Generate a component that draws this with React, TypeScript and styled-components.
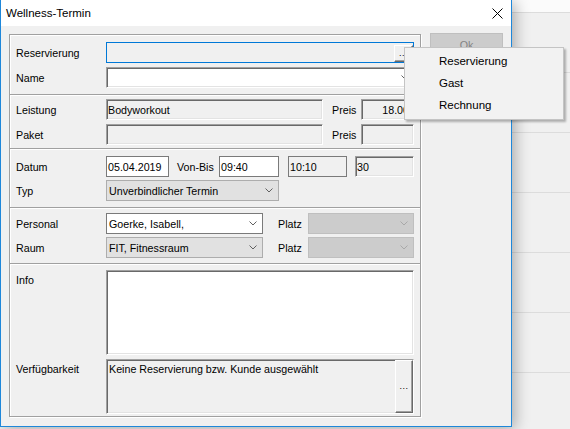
import React from "react";
import styled, { createGlobalStyle, css } from "styled-components";

const GlobalStyle = createGlobalStyle`
  html, body {
    margin: 0;
    padding: 0;
  }
  body {
    width: 570px;
    height: 429px;
    overflow: hidden;
    font-family: "Liberation Sans", Arial, sans-serif;
    font-size: 10.7px;
    color: #000;
    background-color: #f0f0f0;
    background-image:
      linear-gradient(#fbfbfb 0 12px, transparent 12px),
      repeating-linear-gradient(to bottom, transparent 0 12px, #dcdcdc 12px 13px, transparent 13px 60px);
  }
`;

const Window = styled.div`
  position: relative;
  width: 512px;
  height: 427px;
  box-sizing: border-box;
  border: 1px solid #1e87da;
  border-top: none;
  background: #f0f0f0;
  box-shadow: 3px 2px 14px rgba(0, 0, 0, 0.3);
  display: flex;
  flex-direction: column;
`;

const TitleBar = styled.div`
  height: 26px;
  flex: none;
  background: #fff;
  display: flex;
  align-items: center;
  justify-content: space-between;
  padding: 0 8px 0 5px;
`;

const Title = styled.span`
  font-size: 11.5px;
`;

const Body = styled.div`
  flex: 1;
  display: flex;
  align-items: flex-start;
  gap: 9px;
  padding: 8px 8px 9px 8px;
`;

const GroupBox = styled.div`
  width: 412px;
  box-sizing: border-box;
  border: 1px solid #a0a0a0;
  box-shadow: inset 1px 1px #fff, 1px 1px #fff;
  display: flex;
  flex-direction: column;
`;

const Section = styled.div<{ $top: number; $bottom: number; $gap: number }>`
  display: flex;
  flex-direction: column;
  gap: ${(p) => p.$gap}px;
  padding: ${(p) => p.$top}px 6px ${(p) => p.$bottom}px;

  & + & {
    border-top: 1px solid #a0a0a0;
    box-shadow: inset 0 1px #fff;
  }
`;

const Row = styled.div<{ $h?: number }>`
  display: flex;
  align-items: center;
  height: ${(p) => p.$h ?? 21}px;
`;

const Label = styled.div<{ $top?: boolean }>`
  width: 90px;
  flex: none;
  white-space: nowrap;
  ${(p) =>
    p.$top &&
    css`
      align-self: flex-start;
      line-height: 21px;
    `}
`;

const InlineLabel = styled.div<{ $w: number; $ml: number }>`
  width: ${(p) => p.$w}px;
  margin-left: ${(p) => p.$ml}px;
  flex: none;
  white-space: nowrap;
`;

type Look = "sunken" | "focus" | "flat";

const looks = {
  sunken: css`
    border: 1px solid;
    border-color: #a0a0a0 #fff #fff #a0a0a0;
    box-shadow: inset 1px 1px #696969, inset -1px -1px #e3e3e3;
  `,
  focus: css`
    border: 1px solid #0078d7;
  `,
  flat: css`
    border: 1px solid #7a7a7a;
  `,
};

const TextBox = styled.div<{
  $look: Look;
  $w?: number;
  $h?: number;
  $white?: boolean;
  $right?: boolean;
  $ml?: number;
}>`
  box-sizing: border-box;
  height: ${(p) => p.$h ?? 21}px;
  ${(p) => (p.$w ? `width: ${p.$w}px; flex: none;` : "flex: 1;")}
  margin-left: ${(p) => p.$ml ?? 0}px;
  background: ${(p) => (p.$white ? "#fff" : "#f0f0f0")};
  display: flex;
  align-items: center;
  justify-content: ${(p) => (p.$right ? "flex-end" : "space-between")};
  padding: 0 ${(p) => (p.$right ? 4 : 0)}px 0 1px;
  white-space: nowrap;
  overflow: hidden;
  ${(p) => looks[p.$look]}
`;

const TallBox = styled(TextBox)`
  align-items: stretch;
  padding: 0;
`;

const BoxText = styled.div`
  flex: 1;
  padding: 3px 3px 0 2px;
  line-height: 13px;
`;

const comboLooks = {
  white: css`
    background: #fff;
    border: 1px solid #7a7a7a;
  `,
  grey: css`
    background: #e1e1e1;
    border: 1px solid #adadad;
  `,
  disabled: css`
    background: #cccccc;
    border: 1px solid #bfbfbf;
  `,
};

type ComboLook = keyof typeof comboLooks;

const Combo = styled.div<{ $look: ComboLook; $w: number }>`
  box-sizing: border-box;
  width: ${(p) => p.$w}px;
  height: 21px;
  flex: none;
  display: flex;
  align-items: center;
  justify-content: space-between;
  padding: 0 5px 0 2px;
  white-space: nowrap;
  ${(p) => comboLooks[p.$look]}
`;

const Gap = styled.div<{ $w: number }>`
  width: ${(p) => p.$w}px;
  flex: none;
`;

const DotsButton = styled.div<{ $w: number; $h?: number }>`
  width: ${(p) => p.$w}px;
  flex: none;
  ${(p) => (p.$h ? `height: ${p.$h}px;` : "align-self: stretch;")}
  box-sizing: border-box;
  border: 1px solid;
  border-color: #fff #696969 #696969 #fff;
  box-shadow: inset -1px -1px #a0a0a0;
  background: #f0f0f0;
  display: flex;
  align-items: center;
  justify-content: center;
  font-size: 9px;
  letter-spacing: 0.5px;
  line-height: 1;
`;

const OkButton = styled.button`
  width: 73px;
  height: 23px;
  box-sizing: border-box;
  margin-top: -1px;
  padding: 0;
  background: #cccccc;
  border: 1px solid #bfbfbf;
  color: #838383;
  font: inherit;
`;

const Menu = styled.div`
  position: absolute;
  left: 403px;
  top: 47px;
  width: 160px;
  box-sizing: border-box;
  padding: 2px 2px 3px;
  background: #f2f2f2;
  border: 1px solid #c4c4c4;
  box-shadow: 2px 2px 2px rgba(0, 0, 0, 0.28);
  font-size: 11.5px;
`;

const MenuItem = styled.div`
  height: 22px;
  line-height: 22px;
  padding-left: 32px;
`;

const Chevron = ({ color = "#606060" }: { color?: string }) => (
  <svg width="8" height="5" viewBox="0 0 8 5">
    <polyline points="0.5,0.5 4,4 7.5,0.5" fill="none" stroke={color} strokeWidth="1" />
  </svg>
);

const CloseIcon = () => (
  <svg width="11" height="11" viewBox="0 0 11 11">
    <path d="M0.5 0.5 L10.5 10.5 M10.5 0.5 L0.5 10.5" stroke="#000" strokeWidth="1" />
  </svg>
);

export default function App() {
  return (
    <>
      <GlobalStyle />
      <Window>
        <TitleBar>
          <Title>Wellness-Termin</Title>
          <CloseIcon />
        </TitleBar>
        <Body>
          <GroupBox>
            <Section $top={7} $bottom={6} $gap={4}>
              <Row>
                <Label>Reservierung</Label>
                <TextBox $look="focus" style={{ alignItems: "flex-start", padding: "2px 0 1px" }}>
                  <span />
                  <DotsButton $w={19} $h={17}>...</DotsButton>
                </TextBox>
              </Row>
              <Row>
                <Label>Name</Label>
                <TextBox $look="sunken" $white style={{ paddingRight: 4 }}>
                  <span />
                  <Chevron />
                </TextBox>
              </Row>
            </Section>

            <Section $top={4} $bottom={3} $gap={4}>
              <Row>
                <Label>Leistung</Label>
                <TextBox $look="sunken" $w={217}>Bodyworkout</TextBox>
                <InlineLabel $w={29} $ml={9}>Preis</InlineLabel>
                <TextBox $look="sunken" $w={53} $right>18.00</TextBox>
              </Row>
              <Row>
                <Label>Paket</Label>
                <TextBox $look="sunken" $w={217} />
                <InlineLabel $w={29} $ml={9}>Preis</InlineLabel>
                <TextBox $look="sunken" $w={53} $right />
              </Row>
            </Section>

            <Section $top={7} $bottom={6} $gap={3}>
              <Row>
                <Label>Datum</Label>
                <TextBox $look="flat" $white $w={63}>05.04.2019</TextBox>
                <InlineLabel $w={42} $ml={8}>Von-Bis</InlineLabel>
                <TextBox $look="flat" $white $w={60}>09:40</TextBox>
                <TextBox $look="flat" $w={59} $ml={9}>10:10</TextBox>
                <TextBox $look="sunken" $w={59} $ml={8}>30</TextBox>
              </Row>
              <Row>
                <Label>Typ</Label>
                <Combo $look="grey" $w={173}>
                  Unverbindlicher Termin
                  <Chevron />
                </Combo>
              </Row>
            </Section>

            <Section $top={5} $bottom={5} $gap={3}>
              <Row>
                <Label>Personal</Label>
                <Combo $look="white" $w={157}>
                  Goerke, Isabell,
                  <Chevron />
                </Combo>
                <InlineLabel $w={30} $ml={15}>Platz</InlineLabel>
                <Combo $look="disabled" $w={106}>
                  <span />
                  <Chevron color="#a8a8a8" />
                </Combo>
              </Row>
              <Row>
                <Label>Raum</Label>
                <Combo $look="grey" $w={157}>
                  FIT, Fitnessraum
                  <Chevron />
                </Combo>
                <InlineLabel $w={30} $ml={15}>Platz</InlineLabel>
                <Combo $look="disabled" $w={106}>
                  <span />
                  <Chevron color="#a8a8a8" />
                </Combo>
              </Row>
            </Section>

            <Section $top={6} $bottom={2} $gap={4}>
              <Row $h={85}>
                <Label $top>Info</Label>
                <TallBox $look="sunken" $white $h={85} />
              </Row>
              <Row $h={55}>
                <Label $top>Verfügbarkeit</Label>
                <TallBox $look="sunken" $h={55}>
                  <BoxText>Keine Reservierung bzw. Kunde ausgewählt</BoxText>
                  <DotsButton $w={18}>...</DotsButton>
                </TallBox>
              </Row>
            </Section>
          </GroupBox>
          <OkButton disabled>Ok</OkButton>
        </Body>
        <Menu>
          <MenuItem>Reservierung</MenuItem>
          <MenuItem>Gast</MenuItem>
          <MenuItem>Rechnung</MenuItem>
        </Menu>
      </Window>
    </>
  );
}
